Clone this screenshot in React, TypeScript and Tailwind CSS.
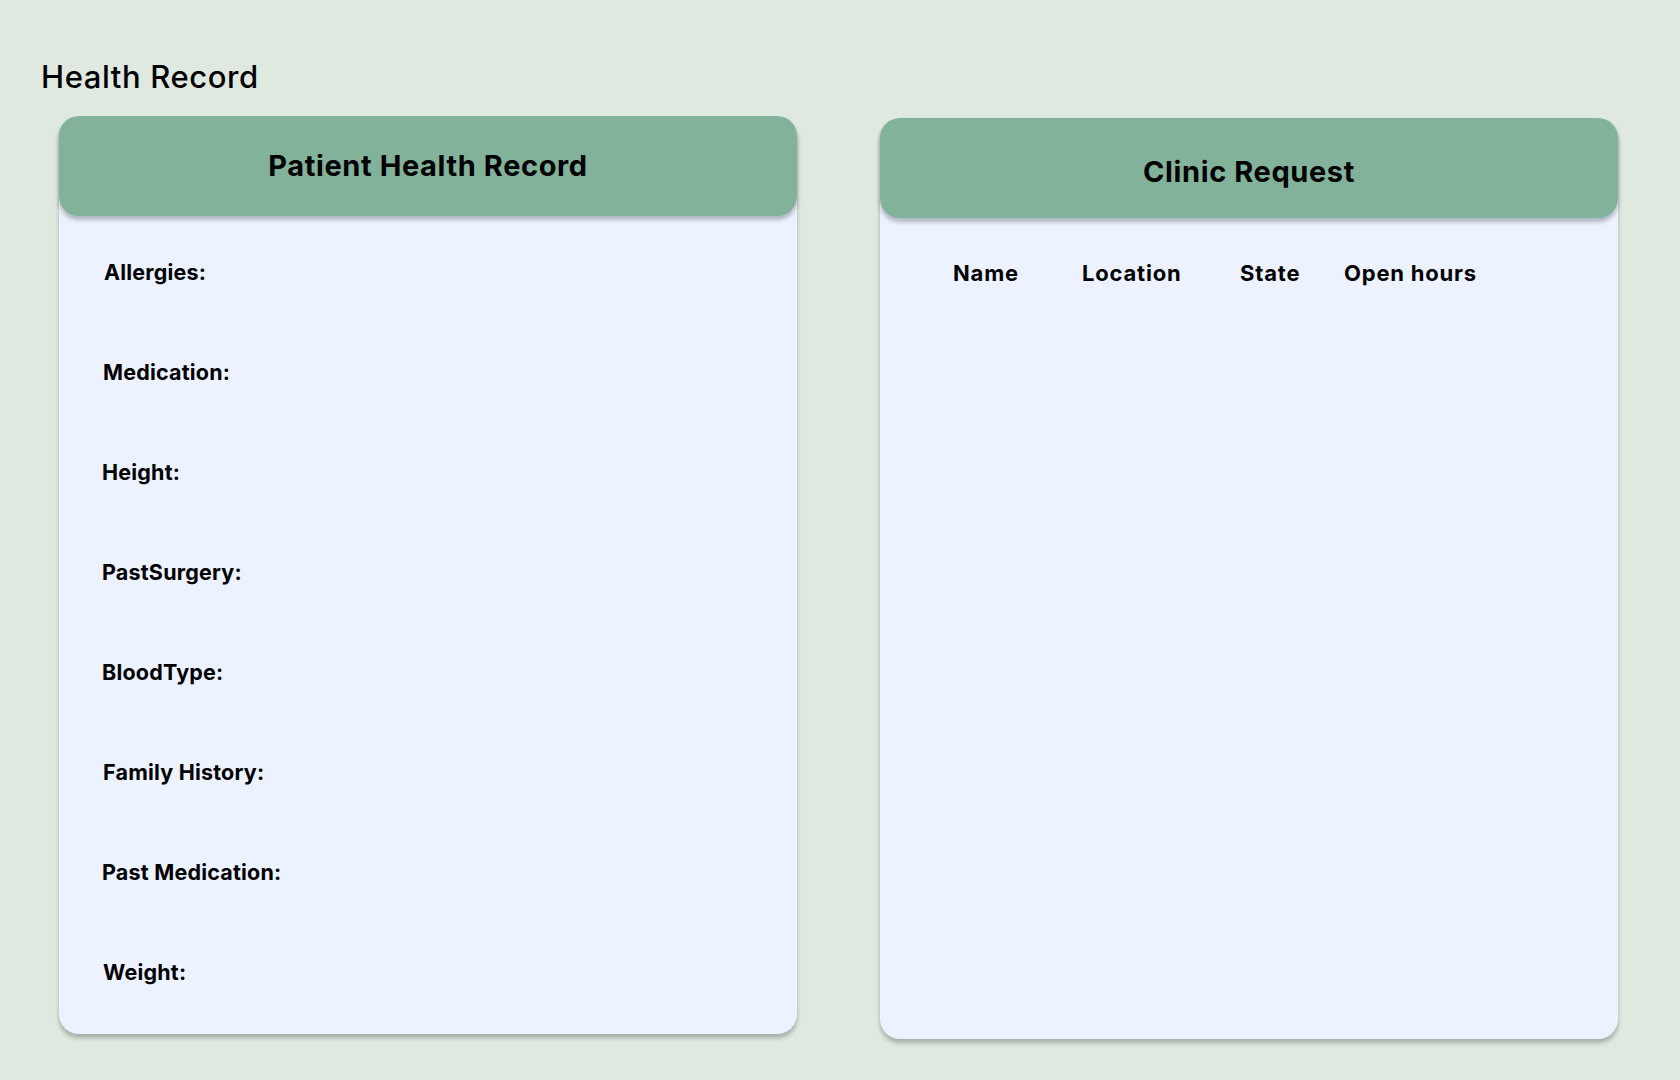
import React from 'react';

const FIELDS = [
  { label: 'Allergies:', offset: 'ml-[2px]' },
  { label: 'Medication:', offset: 'ml-[1px]' },
  { label: 'Height:', offset: 'ml-0' },
  { label: 'PastSurgery:', offset: 'ml-0' },
  { label: 'BloodType:', offset: 'ml-0' },
  { label: 'Family History:', offset: 'ml-[1px]' },
  { label: 'Past Medication:', offset: 'ml-0' },
  { label: 'Weight:', offset: 'ml-[1px]' },
];

const COLUMNS = [
  { label: 'Name', width: 'w-[129px]' },
  { label: 'Location', width: 'w-[158px]' },
  { label: 'State', width: 'w-[104px]' },
  { label: 'Open hours', width: 'w-auto' },
];

function CardHeader({ title, extra = '' }: { title: string; extra?: string }) {
  return (
    <div
      className={`relative z-10 h-[100px] rounded-[20px] bg-[#82b29a] flex items-center justify-center shadow-[0_4px_4px_rgba(0,0,0,0.25)] ${extra}`}
    >
      <h2 className="text-[29px] leading-[36px] tracking-[0.6px] font-bold text-black">{title}</h2>
    </div>
  );
}

export default function App() {
  return (
    <div
      className="min-h-screen w-full bg-[#dfe9e0] text-black"
      style={{ fontFamily: 'Inter, "Noto Sans", sans-serif' }}
    >
      <div className="pt-[59px] pl-[41px]">
        <h1 className="text-[31px] leading-9 tracking-[0.6px] font-medium">Health Record</h1>
      </div>

      <div className="flex items-start gap-[83px] pl-[59px] mt-[21px]">
        {/* Patient Health Record */}
        <section className="w-[738px] h-[918px] rounded-[20px] bg-[#ecf2ff] shadow-[0_4px_4px_rgba(0,0,0,0.25)]">
          <CardHeader title="Patient Health Record" />
          <div className="flex flex-col gap-[72px] pt-[42px] pl-[43px]">
            {FIELDS.map((f) => (
              <div
                key={f.label}
                className={`h-[28px] text-[21.5px] leading-[28px] tracking-[0.2px] font-bold ${f.offset}`}
              >
                {f.label}
              </div>
            ))}
          </div>
        </section>

        {/* Clinic Request */}
        <section className="mt-[2px] w-[738px] h-[921px] rounded-[20px] bg-[#ecf2ff] shadow-[0_4px_4px_rgba(0,0,0,0.25)]">
          <CardHeader title="Clinic Request" extra="pt-[7px]" />
          <div className="flex pt-[41px] pl-[73px]">
            {COLUMNS.map((c) => (
              <div
                key={c.label}
                className={`${c.width} h-[28px] text-[22px] leading-[28px] tracking-[0.8px] font-bold`}
              >
                {c.label}
              </div>
            ))}
          </div>
        </section>
      </div>
    </div>
  );
}
